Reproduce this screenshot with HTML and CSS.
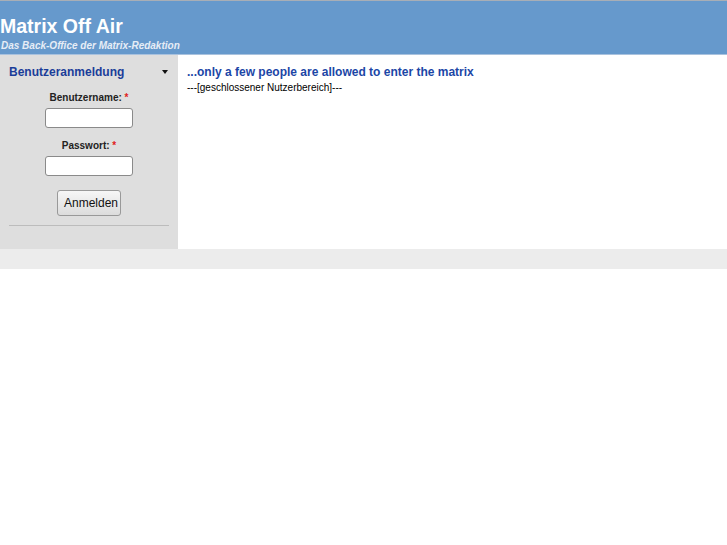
FILE: index.html
```html
<!DOCTYPE html>
<html lang="de">
<head>
  <meta charset="UTF-8">
  <title>Matrix Off Air</title>
  <link rel="stylesheet" href="styles.css">
</head>
<body>

  <div class="header">
    <h1>Matrix Off Air</h1>
    <div class="slogan">Das Back-Office der Matrix-Redaktion</div>
  </div>

  <div class="main">
    <div class="sidebar">
      <div class="block-title">
        <span>Benutzeranmeldung</span>
        <span class="arrow"></span>
      </div>
      <form class="login">
        <label>Benutzername: <span class="req">*</span></label>
        <input type="text">
        <label>Passwort: <span class="req">*</span></label>
        <input type="password">
        <button type="button">Anmelden</button>
      </form>
      <hr>
    </div>

    <div class="content">
      <h2>...only a few people are allowed to enter the matrix</h2>
      <p>---[geschlossener Nutzerbereich]---</p>
    </div>
  </div>

  <div class="footer"></div>

</body>
</html>
```

FILE: styles.css
```css
body {
  margin: 0;
  background: #fff;
  font-family: 'Liberation Sans', Arial, sans-serif;
  color: #000;
}

.header {
  background: #6699cc;
  border-top: 1px solid #a8aeb6;
  border-bottom: 1px solid #a9c2de;
  box-sizing: border-box;
  height: 55px;
  padding-top: 13px;
}

.header h1 {
  margin: 0;
  color: #fff;
  font-size: 19.5px;
  line-height: 24px;
  font-weight: bold;
}

.slogan {
  color: #e6edf6;
  font-size: 10px;
  font-weight: bold;
  font-style: italic;
  margin-top: 2px;
  padding-left: 1px;
}

.main {
  display: flex;
}

.sidebar {
  width: 178px;
  background: #dedede;
  padding: 9px 9px 23px;
  box-sizing: border-box;
}

.block-title {
  display: flex;
  justify-content: space-between;
  align-items: center;
  color: #1a3d99;
  font-size: 12px;
  font-weight: bold;
  line-height: 16px;
}

.arrow {
  width: 0;
  height: 0;
  border-left: 3.5px solid transparent;
  border-right: 3.5px solid transparent;
  border-top: 4px solid #111;
  margin-right: 1px;
}

.login {
  display: flex;
  flex-direction: column;
  align-items: center;
  padding-top: 12px;
}

.login label {
  font-size: 10px;
  font-weight: bold;
  color: #222;
  line-height: 12px;
  margin-bottom: 4px;
}

.req { color: #e02020; }

.login input {
  width: 88px;
  height: 20px;
  box-sizing: border-box;
  border: 1px solid #8a8a8a;
  border-radius: 3px;
  background: #fff;
  margin: 0 0 12px;
}

.login button {
  margin-top: 2px;
  width: 64px;
  height: 26px;
  font-family: 'Liberation Sans', Arial, sans-serif;
  font-size: 12px;
  color: #111;
  border: 1px solid #999;
  border-radius: 3px;
  background: linear-gradient(#f6f6f6, #dcdcdc);
}

.sidebar hr {
  border: 0;
  border-top: 1px solid #bcbcbc;
  margin: 9px 0 0;
}

.content {
  flex: 1;
  padding: 10px 9px;
}

.content h2 {
  margin: 0;
  color: #1c46a6;
  font-size: 12px;
  font-weight: bold;
  line-height: 15px;
}

.content p {
  margin: 2px 0 0;
  font-size: 10px;
  line-height: 12px;
}

.footer {
  height: 20px;
  background: #ececec;
}
```
